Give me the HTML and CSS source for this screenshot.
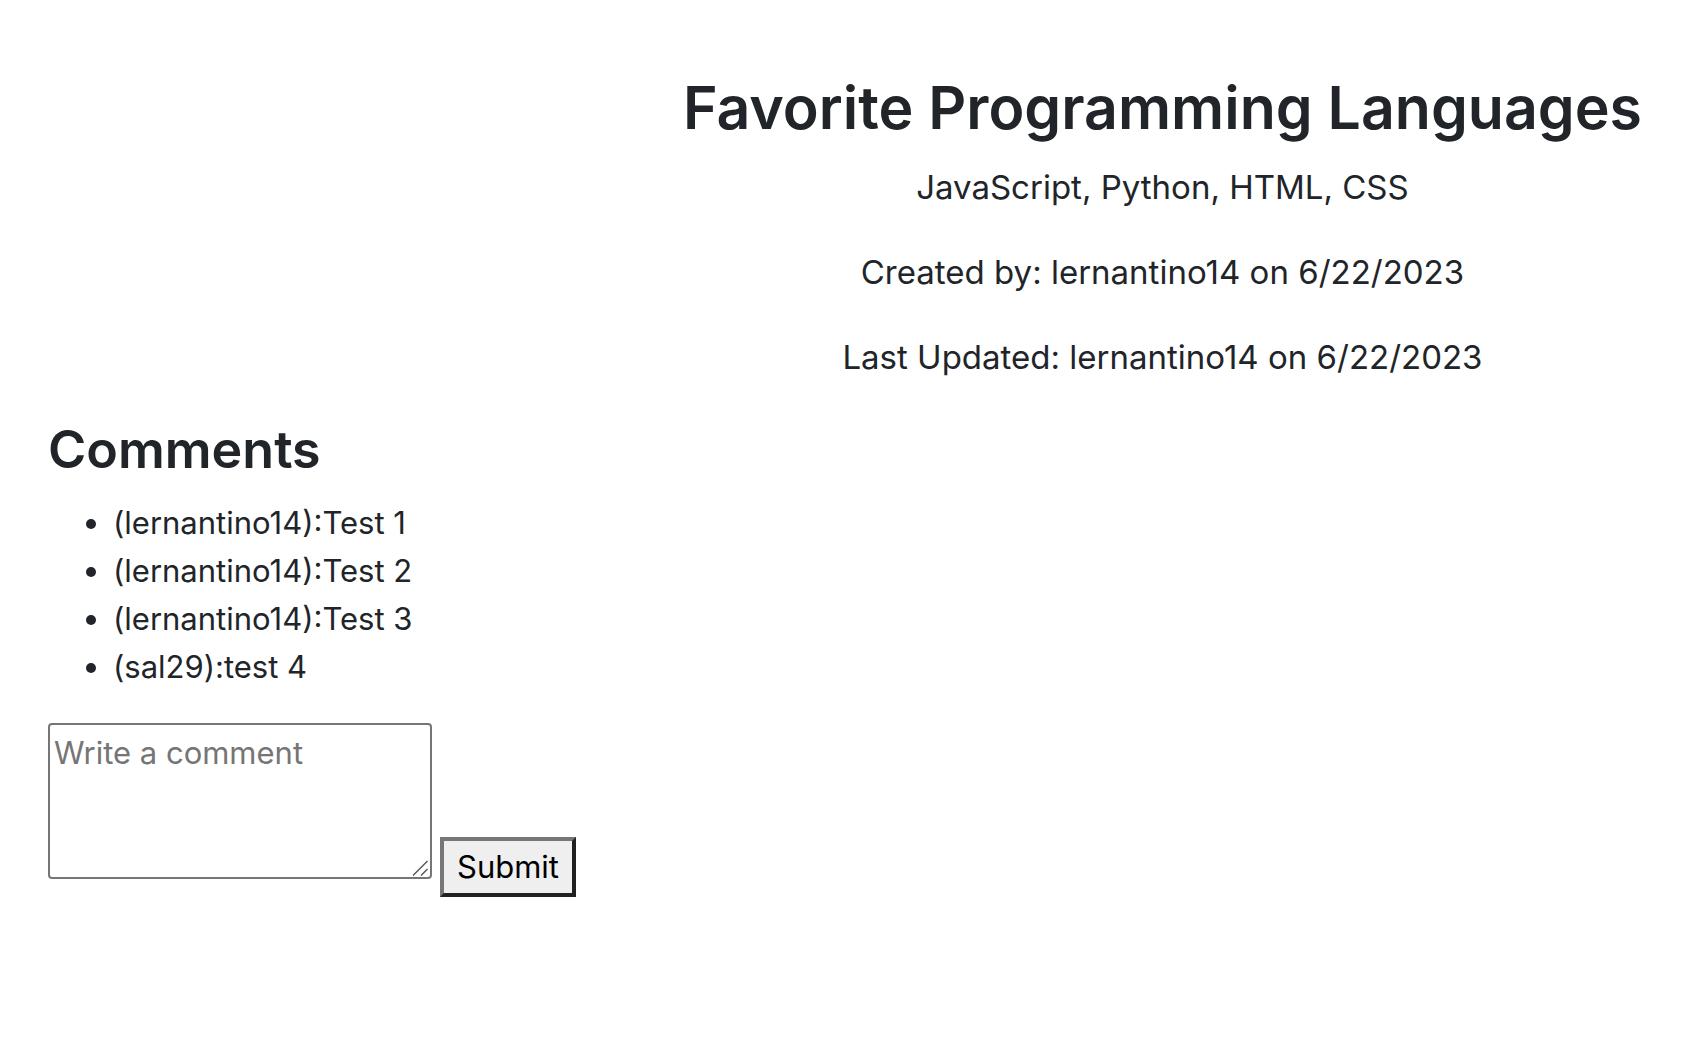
FILE: index.html
```
<!DOCTYPE html>
<html lang="en">
<head>
<meta charset="utf-8">
<meta name="viewport" content="width=device-width, initial-scale=1">
<title>Favorite Programming Languages</title>
<link rel="stylesheet" href="styles.css">
</head>
<body>
<main class="page">
  <article class="post">
    <h1 class="post-title">Favorite Programming Languages</h1>
    <p class="post-line">JavaScript, Python, HTML, CSS</p>
    <p class="post-line">Created by: lernantino14 on 6/22/2023</p>
    <p class="post-line">Last Updated: lernantino14 on 6/22/2023</p>
  </article>
  <section class="comments">
    <h2 class="comments-title">Comments</h2>
    <ul class="comment-list">
      <li>(lernantino14):Test 1</li>
      <li>(lernantino14):Test 2</li>
      <li>(lernantino14):Test 3</li>
      <li>(sal29):test 4</li>
    </ul>
    <form class="comment-form">
      <div class="comment-field">
        <textarea class="comment-input" aria-label="Write a comment" placeholder="Write a comment"></textarea>
        <svg class="grip" viewBox="0 0 16 16" aria-hidden="true"><path d="M1 15.5 15.5 1M9 15.5 15.5 9" fill="none" stroke="#555" stroke-width="1.4"/></svg>
      </div>
      <button class="submit" type="button">Submit</button>
    </form>
  </section>
</main>
</body>
</html>
```

FILE: styles.css
```
* { box-sizing: border-box; }
body {
  margin: 0;
  background: #fff;
  color: #212529;
  font-family: Inter, "Liberation Sans", sans-serif;
  font-size: 31px;
  line-height: 48px;
}
.page { padding: 72px 48px; }
.post {
  width: fit-content;
  margin-left: auto;
  text-align: center;
}
.post-title {
  margin: 0 0 17px;
  font-size: 59px;
  line-height: 72px;
  font-weight: 600;
}
.post-line {
  margin: 0 0 32px;
  font-size: 33px;
  line-height: 53px;
}
.comments-title {
  margin: 0 0 16px;
  font-size: 52px;
  line-height: 67px;
  font-weight: 600;
}
.comment-list { margin: 0 0 32px; padding-left: 65px; }
.comment-form { display: flex; align-items: flex-end; gap: 8px; }
.comment-field {
  position: relative;
  margin-bottom: 18px;
}
.comment-input {
  display: block;
  width: 384px;
  height: 156px;
  padding: 4px;
  border: 2px solid #767676;
  border-radius: 4px;
  background: #fff;
  font: inherit;
  resize: both;
}
.comment-input::placeholder { color: #757575; }
.comment-input::-webkit-resizer { background: transparent; }
.grip {
  position: absolute;
  right: 4px;
  bottom: 3px;
  width: 16px;
  height: 16px;
  pointer-events: none;
}
.submit {
  height: 60px;
  padding: 0 13px;
  border: 4px solid;
  border-color: #767676 #212121 #212121 #767676;
  background: #efefef;
  color: #000;
  font: inherit;
}
```
